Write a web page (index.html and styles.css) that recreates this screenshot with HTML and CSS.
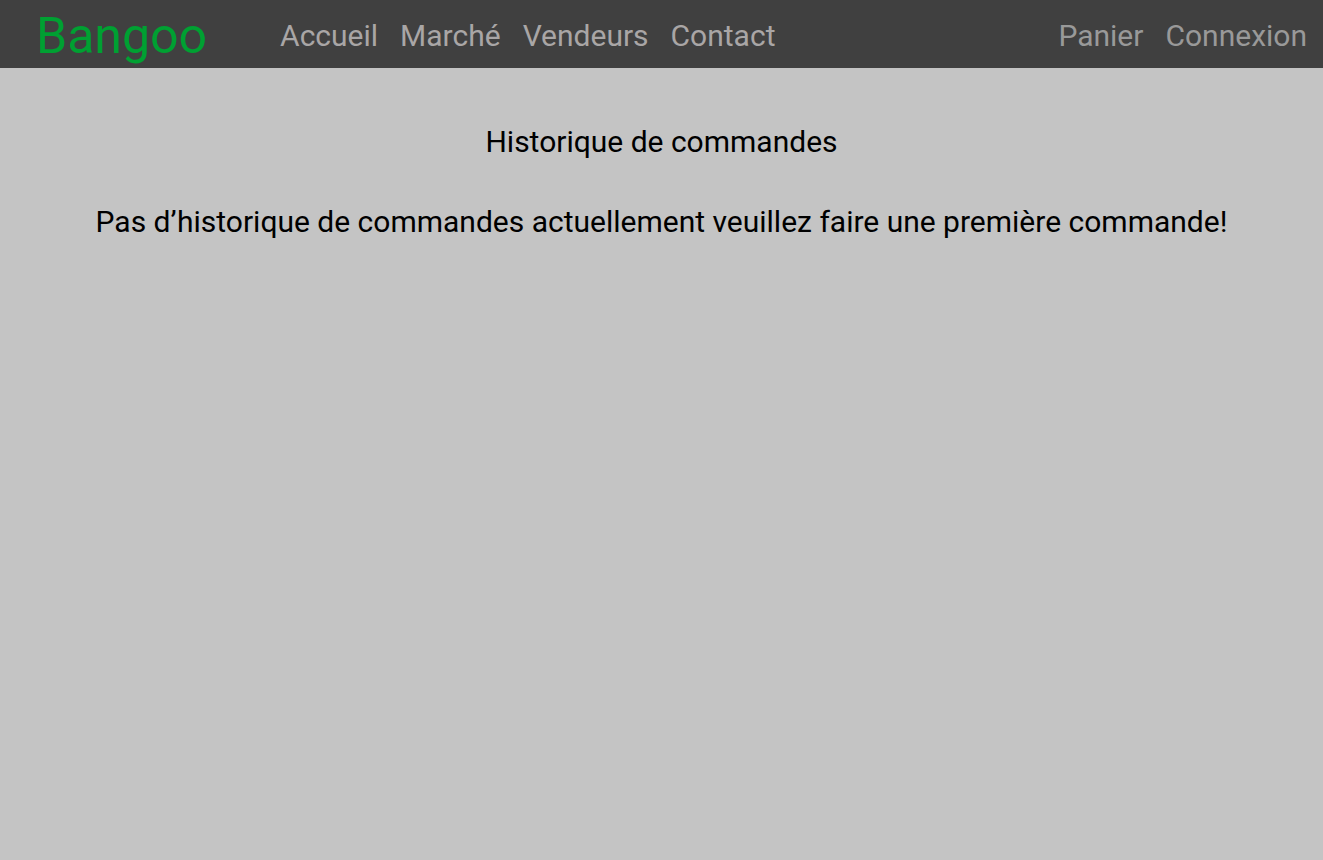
FILE: index.html
```html
<!DOCTYPE html>
<html lang="fr">
<head>
<meta charset="utf-8">
<title>Bangoo - Historique de commandes</title>
<link rel="stylesheet" href="styles.css">
</head>
<body>
<header class="topbar">
  <a class="logo" href="#">Bangoo</a>
  <nav class="nav-main">
    <a href="#">Accueil</a>
    <a href="#">Marché</a>
    <a href="#">Vendeurs</a>
    <a href="#">Contact</a>
  </nav>
  <nav class="nav-user">
    <a href="#">Panier</a>
    <a href="#">Connexion</a>
  </nav>
</header>
<main class="content">
  <h1 class="title">Historique de commandes</h1>
  <p class="empty">Pas d’historique de commandes actuellement veuillez faire une première commande!</p>
</main>
</body>
</html>
```
FILE: styles.css
```css
html, body {
  margin: 0;
  padding: 0;
}
body {
  background: #c4c4c4;
  font-family: Roboto, "Liberation Sans", sans-serif;
  min-height: 860px;
}
a {
  text-decoration: none;
}
.topbar {
  display: flex;
  align-items: center;
  height: 68px;
  background: #404040;
  padding: 0 16px 0 36px;
}
.logo {
  color: #00a032;
  font-size: 50px;
  line-height: 1;
  margin-right: 73px;
  margin-top: 4px;
}
.nav-main, .nav-user {
  display: flex;
  gap: 22px;
  font-size: 30px;
  margin-top: 3px;
}
.nav-main a {
  color: #a9a6a6;
}
.nav-user {
  margin-left: auto;
}
.nav-user a {
  color: #999;
}
.content {
  text-align: center;
  color: #000;
}
.title {
  font-weight: 400;
  font-size: 30px;
  margin: 54px 0 0;
  line-height: 40px;
}
.empty {
  font-size: 30px;
  margin: 40px 0 0;
  line-height: 40px;
}
```
